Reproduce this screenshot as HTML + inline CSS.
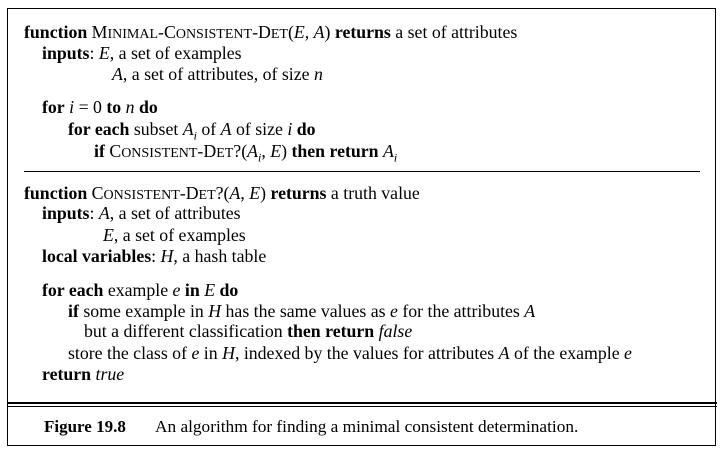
<!DOCTYPE html>
<html><head><meta charset="utf-8"><style>
body{margin:0;width:727px;height:456px;background:#fff;font-family:"Liberation Serif",serif;font-size:17.8px;color:#000;position:relative;overflow:hidden}
.l{position:absolute;white-space:nowrap;line-height:18px}
i{font-style:italic}
s{text-decoration:none;font-size:14px}
sub{font-size:12px}
#box{position:absolute;left:7px;top:8px;width:709px;height:438px;border:1px solid #000;box-sizing:border-box}
.hr{position:absolute;background:#000;height:1px}
</style></head><body>
<div id="box"></div>
<div class="hr" style="left:24px;width:676px;top:171px"></div>
<div class="hr" style="left:7px;width:710px;top:402px;height:2px"></div>
<div class="hr" style="left:7px;width:710px;top:406px"></div>
<div class="l" style="left:24px;top:23px"><b>function</b> M<s>INIMAL</s>-C<s>ONSISTENT</s>-D<s>ET</s>(<i>E</i>, <i>A</i>) <b>returns</b> a set of attributes</div>
<div class="l" style="left:42px;top:44px"><b>inputs</b>: <i>E</i>, a set of examples</div>
<div class="l" style="left:112px;top:65px"><i>A</i>, a set of attributes, of size <i>n</i></div>
<div class="l" style="left:42px;top:98px"><b>for</b> <i>i</i> = 0 <b>to</b> <i>n</i> <b>do</b></div>
<div class="l" style="left:68px;top:120px"><b>for each</b> subset <i>A<sub>i</sub></i> of <i>A</i> of size <i>i</i> <b>do</b></div>
<div class="l" style="left:94px;top:142px"><b>if</b> C<s>ONSISTENT</s>-D<s>ET</s>?(<i>A<sub>i</sub></i>, <i>E</i>) <b>then return</b> <i>A<sub>i</sub></i></div>
<div class="l" style="left:24px;top:184px"><b>function</b> C<s>ONSISTENT</s>-D<s>ET</s>?(<i>A</i>, <i>E</i>) <b>returns</b> a truth value</div>
<div class="l" style="left:42px;top:204px"><b>inputs</b>: <i>A</i>, a set of attributes</div>
<div class="l" style="left:103px;top:226px"><i>E</i>, a set of examples</div>
<div class="l" style="left:42px;top:247px"><b>local variables</b>: <i>H</i>, a hash table</div>
<div class="l" style="left:42px;top:281px"><b>for each</b> example <i>e</i> <b>in</b> <i>E</i> <b>do</b></div>
<div class="l" style="left:68px;top:302px"><b>if</b> some example in <i>H</i> has the same values as <i>e</i> for the attributes <i>A</i></div>
<div class="l" style="left:84px;top:322px">but a different classification <b>then return</b> <i>false</i></div>
<div class="l" style="left:68px;top:344px">store the class of <i>e</i> in <i>H</i>, indexed by the values for attributes <i>A</i> of the example <i>e</i></div>
<div class="l" style="left:42px;top:365px"><b>return</b> <i>true</i></div>
<div class="l" style="left:44px;top:418px;font-size:17px"><b>Figure 19.8</b></div>
<div class="l" style="left:155px;top:418px;font-size:17.3px">An algorithm for finding a minimal consistent determination.</div>
</body></html>
